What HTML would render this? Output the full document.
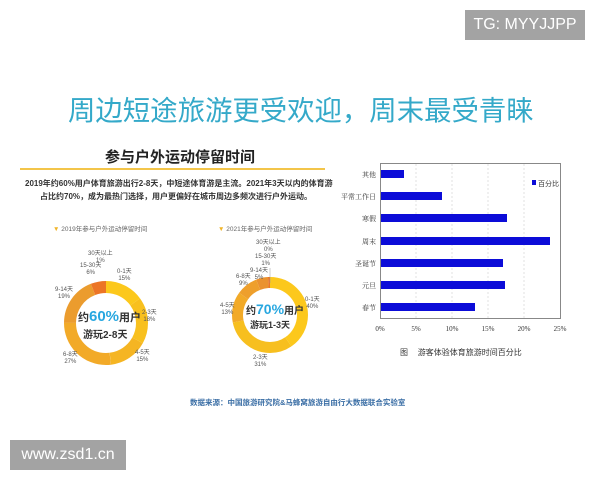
<!DOCTYPE html>
<html><head><meta charset="utf-8"><style>
*{margin:0;padding:0}
body{width:600px;height:480px;background:#fff;position:relative;overflow:hidden;font-family:"Liberation Sans","Noto Sans CJK SC",sans-serif}
.a{position:absolute;white-space:nowrap}
.s{font-size:6px;color:#555;text-align:center;line-height:7px}
</style></head><body>
<div class="a" style="left:465px;top:10px;width:120px;height:30px;background:#a3a3a3;color:#fff;font-size:16px;line-height:30px;text-align:center">TG: MYYJJPP</div>
<div class="a" style="left:68px;top:88px;font-size:27.4px;color:#34a9c9">周边短途旅游更受欢迎，周末最受青睐</div>
<div class="a" style="left:105px;top:146px;font-size:15px;font-weight:bold;color:#222">参与户外运动停留时间</div>
<div class="a" style="left:20px;top:168px;width:305px;height:2px;background:#f3c54a"></div>
<div class="a" style="left:25px;top:178px;font-size:8px;font-weight:bold;color:#333">2019年约60%用户体育旅游出行2-8天，中短途体育游是主流。2021年3天以内的体育游</div>
<div class="a" style="left:40px;top:191px;font-size:8px;font-weight:bold;color:#333">占比约70%，成为最热门选择，用户更偏好在城市周边多频次进行户外运动。</div>
<div class="a" style="left:53px;top:223px;font-size:6.5px;color:#666"><span style="color:#f0b429">▼</span> 2019年参与户外运动停留时间</div>
<div class="a" style="left:218px;top:223px;font-size:6.5px;color:#666"><span style="color:#f0b429">▼</span> 2021年参与户外运动停留时间</div>
<svg class="a" style="left:0;top:0" width="600" height="480">
<g transform="translate(106,323) rotate(-90)" fill="none" stroke-width="12">
<circle r="36" stroke="#fcc81c" stroke-dasharray="33.9 300"/>
<circle r="36" stroke="#f8c01e" stroke-dasharray="40.7 300" stroke-dashoffset="-33.9"/>
<circle r="36" stroke="#f5b523" stroke-dasharray="33.9 300" stroke-dashoffset="-74.6"/>
<circle r="36" stroke="#f2aa28" stroke-dasharray="61.1 300" stroke-dashoffset="-108.6"/>
<circle r="36" stroke="#eb9c2e" stroke-dasharray="43 300" stroke-dashoffset="-169.6"/>
<circle r="36" stroke="#ec7526" stroke-dasharray="13.6 300" stroke-dashoffset="-212.6"/>
</g>
<g transform="translate(270,315) rotate(-90)" fill="none" stroke-width="11">
<circle r="32.5" stroke="#fcc81c" stroke-dasharray="82.5 300"/>
<circle r="32.5" stroke="#f7bf1f" stroke-dasharray="63.9 300" stroke-dashoffset="-82.5"/>
<circle r="32.5" stroke="#f2aa28" stroke-dasharray="26.8 300" stroke-dashoffset="-146.4"/>
<circle r="32.5" stroke="#ee9f2c" stroke-dasharray="18.6 300" stroke-dashoffset="-173.2"/>
<circle r="32.5" stroke="#ea922f" stroke-dasharray="10.3 300" stroke-dashoffset="-191.8"/>
<circle r="32.5" stroke="#ec7526" stroke-dasharray="2.1 300" stroke-dashoffset="-202.1"/>
</g>
<line x1="270" y1="268" x2="270" y2="283" stroke="#999" stroke-width="0.5"/>
<rect x="380.5" y="163.5" width="180" height="155" fill="none" stroke="#888" stroke-width="1"/>
<g stroke="#ccc" stroke-dasharray="2 2" stroke-width="0.6">
<line x1="416" y1="164" x2="416" y2="318"/><line x1="452" y1="164" x2="452" y2="318"/><line x1="488" y1="164" x2="488" y2="318"/><line x1="524" y1="164" x2="524" y2="318"/>
</g>
<g fill="#0c0cd8">
<rect x="381" y="170" width="23" height="8"/>
<rect x="381" y="192" width="61" height="8"/>
<rect x="381" y="214" width="126" height="8"/>
<rect x="381" y="237" width="169" height="8"/>
<rect x="381" y="259" width="122" height="8"/>
<rect x="381" y="281" width="124" height="8"/>
<rect x="381" y="303" width="94" height="8"/>
<rect x="532" y="180" width="4" height="5"/>
</g>
<g font-size="7" fill="#333" text-anchor="end" font-family="Liberation Serif,Noto Serif CJK SC,serif">
<text x="376" y="177">其他</text><text x="376" y="199">平常工作日</text><text x="376" y="221">寒假</text><text x="376" y="244">周末</text><text x="376" y="266">圣诞节</text><text x="376" y="288">元旦</text><text x="376" y="310">春节</text>
</g>
<g font-size="7" fill="#333" text-anchor="middle" font-family="Liberation Serif,serif">
<text x="380" y="331">0%</text><text x="416" y="331">5%</text><text x="452" y="331">10%</text><text x="488" y="331">15%</text><text x="524" y="331">20%</text><text x="560" y="331">25%</text>
</g>
<text x="538" y="186" font-size="7" fill="#333" font-family="Noto Sans CJK SC,sans-serif">百分比</text>
<text x="400" y="355" font-size="8" fill="#333" font-family="Noto Sans CJK SC,sans-serif">图　 游客体验体育旅游时间百分比</text>
</svg>
<div class="a" style="left:78px;top:308px;font-size:11px;font-weight:bold;color:#333">约<span style="color:#27a7e0;font-size:15px">60%</span>用户</div>
<div class="a" style="left:83px;top:326px;font-size:10px;font-weight:bold;color:#333">游玩2-8天</div>
<div class="a" style="left:246px;top:301px;font-size:10px;font-weight:bold;color:#333">约<span style="color:#27a7e0;font-size:14px">70%</span>用户</div>
<div class="a" style="left:250px;top:318px;font-size:9px;font-weight:bold;color:#333">游玩1-3天</div>
<div class="a s" style="left:88px;top:251px">30天以上<br>1%</div>
<div class="a s" style="left:80px;top:263px">15-30天<br>6%</div>
<div class="a s" style="left:117px;top:269px">0-1天<br>15%</div>
<div class="a s" style="left:55px;top:287px">9-14天<br>19%</div>
<div class="a s" style="left:142px;top:310px">2-3天<br>18%</div>
<div class="a s" style="left:135px;top:350px">4-5天<br>15%</div>
<div class="a s" style="left:63px;top:352px">6-8天<br>27%</div>
<div class="a s" style="left:256px;top:240px">30天以上<br>0%</div>
<div class="a s" style="left:255px;top:254px">15-30天<br>1%</div>
<div class="a s" style="left:250px;top:268px">9-14天<br>5%</div>
<div class="a s" style="left:236px;top:274px">6-8天<br>9%</div>
<div class="a s" style="left:305px;top:297px">0-1天<br>40%</div>
<div class="a s" style="left:220px;top:303px">4-5天<br>13%</div>
<div class="a s" style="left:253px;top:355px">2-3天<br>31%</div>
<div class="a" style="left:190px;top:397px;font-size:7.5px;font-weight:bold;color:#3a6ea5">数据来源：中国旅游研究院&amp;马蜂窝旅游自由行大数据联合实验室</div>
<div class="a" style="left:10px;top:440px;width:116px;height:30px;background:#a3a3a3;color:#fff;font-size:16px;line-height:30px;text-align:center">www.zsd1.cn</div>
</body></html>
